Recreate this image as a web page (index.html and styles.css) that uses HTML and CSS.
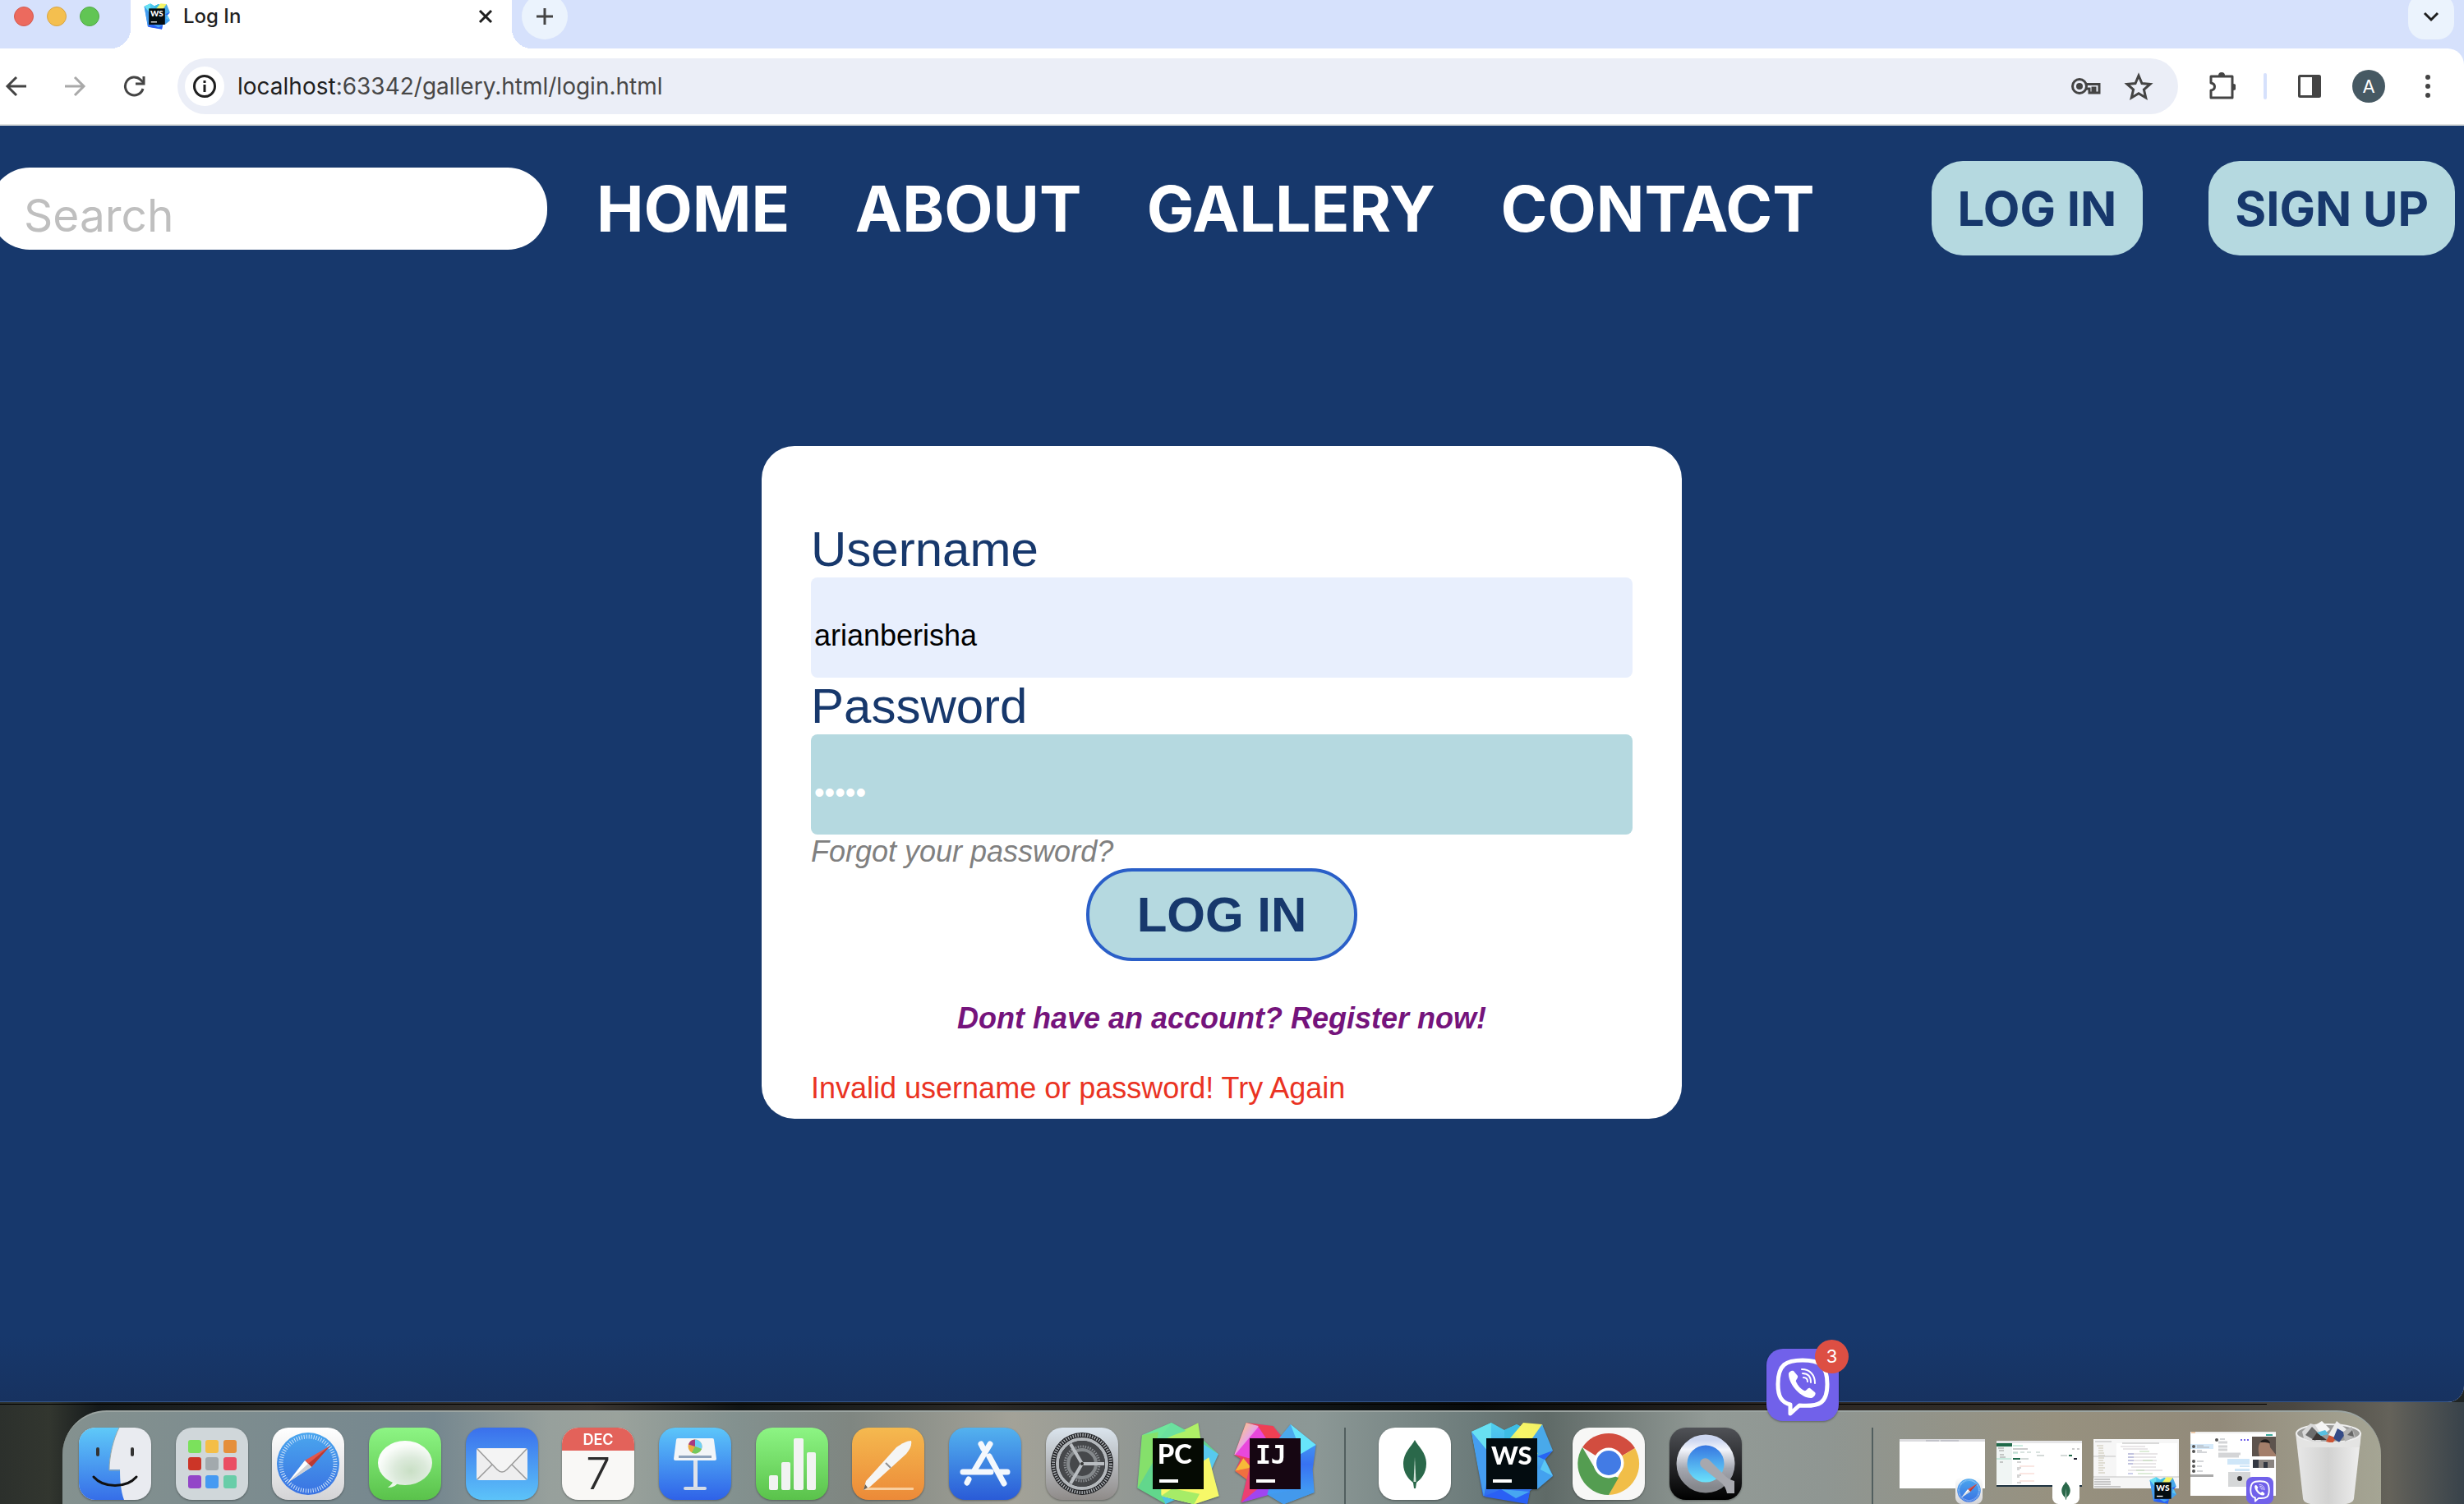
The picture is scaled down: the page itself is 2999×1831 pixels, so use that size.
FILE: index.html
```html
<!DOCTYPE html>
<html lang="en">
<head>
<meta charset="utf-8">
<meta name="viewport" content="width=device-width, initial-scale=1">
<title>Log In</title>
<link rel="stylesheet" href="styles.css">
</head>
<body>

<svg class="defs" width="0" height="0" aria-hidden="true">
  <defs>
    <linearGradient id="white-gray" x1="0" y1="0" x2="0" y2="1"><stop offset="0" stop-color="#fff"/><stop offset="1" stop-color="#d4d4d6"/></linearGradient>
    <linearGradient id="finder-blue" x1="0" y1="0" x2="0" y2="1"><stop offset="0" stop-color="#5fc9f8"/><stop offset="1" stop-color="#366ee8"/></linearGradient>
    <linearGradient id="green" x1="0" y1="0" x2="0" y2="1"><stop offset="0" stop-color="#8df584"/><stop offset="1" stop-color="#5ac24b"/></linearGradient>
    <linearGradient id="mail" x1="0" y1="0" x2="0" y2="1"><stop offset="0" stop-color="#3a70ec"/><stop offset="1" stop-color="#5cc3f9"/></linearGradient>
    <linearGradient id="blue-down" x1="0" y1="0" x2="0" y2="1"><stop offset="0" stop-color="#5cc6fa"/><stop offset="1" stop-color="#2f62e8"/></linearGradient>
    <linearGradient id="orange" x1="0" y1="0" x2="0" y2="1"><stop offset="0" stop-color="#f5b94f"/><stop offset="1" stop-color="#ec8a38"/></linearGradient>
    <linearGradient id="store" x1="0" y1="0" x2="0" y2="1"><stop offset="0" stop-color="#53b2ef"/><stop offset="1" stop-color="#2a5bd7"/></linearGradient>
    <linearGradient id="safari-blue" x1="0" y1="0" x2="0" y2="1"><stop offset="0" stop-color="#4aa6ee"/><stop offset="1" stop-color="#3a72e2"/></linearGradient>
    <linearGradient id="gear-plate" x1="0" y1="0" x2="0" y2="1"><stop offset="0" stop-color="#dbe5ee"/><stop offset="1" stop-color="#8f8b89"/></linearGradient>
    <linearGradient id="black-down" x1="0" y1="0" x2="0" y2="1"><stop offset="0" stop-color="#505257"/><stop offset="1" stop-color="#000"/></linearGradient>
    <linearGradient id="qt-ring" x1="0" y1="0" x2="0" y2="1"><stop offset="0" stop-color="#ccd6f0"/><stop offset=".2" stop-color="#f2f5fc"/><stop offset=".6" stop-color="#a4a7b0"/><stop offset="1" stop-color="#85878c"/></linearGradient>
    <linearGradient id="qt-blue" x1="0" y1="0" x2="0" y2="1"><stop offset="0" stop-color="#2e66dd"/><stop offset="1" stop-color="#74f2ff"/></linearGradient>
    <linearGradient id="ws-a" x1="0" y1="0" x2="0" y2="1"><stop offset="0" stop-color="#4fd0ee"/><stop offset=".5" stop-color="#45a5f0"/><stop offset="1" stop-color="#2a5cf0"/></linearGradient>
    <linearGradient id="ws-b" x1="0" y1="1" x2="1" y2="0"><stop offset="0" stop-color="#6be0b0"/><stop offset=".5" stop-color="#f8f668"/><stop offset="1" stop-color="#f2f163"/></linearGradient>
    <linearGradient id="ij-a" x1="0" y1="0" x2="1" y2="1"><stop offset="0" stop-color="#fcd35c"/><stop offset=".5" stop-color="#e9a7e0"/><stop offset="1" stop-color="#e83ce8"/></linearGradient>
    <linearGradient id="ij-b" x1="0" y1="0" x2="1" y2="1"><stop offset="0" stop-color="#f1434c"/><stop offset=".6" stop-color="#e83a78"/><stop offset="1" stop-color="#8a45f5"/></linearGradient>
    <linearGradient id="ij-c" x1="0" y1="0" x2="0" y2="1"><stop offset="0" stop-color="#4cb5f2"/><stop offset=".5" stop-color="#3872f2"/><stop offset="1" stop-color="#46aef3"/></linearGradient>
    <linearGradient id="trash" x1="0" y1="0" x2="1" y2="0"><stop offset="0" stop-color="#e8e8e8"/><stop offset=".5" stop-color="#d2d2d1"/><stop offset="1" stop-color="#efefef"/></linearGradient>
    <radialGradient id="bubble" cx=".6" cy=".68" r=".6"><stop offset="0" stop-color="#c9dfc5"/><stop offset=".5" stop-color="#dceadb"/><stop offset="1" stop-color="#fafdfa"/></radialGradient>
  </defs>

  <symbol id="safari" viewBox="0 0 88 88">
    <rect width="88" height="88" rx="20" fill="url(#white-gray)"/>
    <circle cx="44" cy="44" r="38" fill="url(#safari-blue)"/>
    <circle cx="44" cy="44" r="33" fill="none" stroke="#cfe4fa" stroke-width="5" stroke-dasharray="1 2"/>
    <path d="M71 22 40 40l8 8z" fill="#e2564b"/><path d="M44 44l27-22-23 26z" fill="#b93a33"/>
    <path d="M19 67 40 40l8 8z" fill="#fff"/><path d="M19 67 44 44l4 4z" fill="#ccd0d6"/>
  </symbol>
  <symbol id="mongo" viewBox="0 0 88 88">
    <rect width="88" height="88" rx="20" fill="#fff"/>
    <path d="M44 15c4 8 14 15 14 29 0 12-7 19-12 23l-1 7h-2l-1-7c-5-4-12-11-12-23 0-14 10-21 14-29z" fill="#2a684a"/>
    <path d="M44 36l1.500 30h-3z" fill="#cfe0d6"/>
  </symbol>
  <symbol id="viber" viewBox="0 0 88 88">
    <rect width="88" height="88" rx="20" fill="#7161ea"/>
    <path d="M44 14c-20 0-30 5-30 29 0 15 4 22 15 25v11l11-10c25 2 34-3 34-26 0-24-10-29-30-29z" fill="none" stroke="#fff" stroke-width="5" stroke-linejoin="round"/>
    <path d="M27 31c0-3 4-5 6-4l5 6c1 3-3 5-2 7 2 5 6 9 10 11 3 1 4-4 7-3l6 5c2 2-1 6-4 7-12 1-28-16-28-29z" fill="#fff"/>
    <path d="M43 25c10 0 16 7 16 17M44 30c7 0 10 4 10 11M45 35c3 0 5 2 5 5" fill="none" stroke="#fff" stroke-width="2" stroke-linecap="round"/>
  </symbol>
  <symbol id="webstorm" viewBox="-6 -7 100 101">
    <path d="M-5 5 19-6l16 9 15-7 20 10 16 20-2 12 10 20-28 19-3 15-54-9z" fill="url(#ws-a)"/>
    <path d="M-5 5 19-6l0 40z" fill="#68e0f2"/><path d="M-5 5 10 84l9-50z" fill="#459df0"/>
    <path d="M50-4 66 6 35 30V3z" fill="#3dbde4"/>
    <path d="M36 20 58-6l23 2 6 24-20 20z" fill="url(#ws-b)"/>
    <path d="M81-4l13 32-10 11-20-19z" fill="#49a9ea"/><path d="M94 28 84 39l-9-4z" fill="#2764f4"/>
    <path d="M84 39l10 20-19 0z" fill="#5bc8f4"/><path d="M75 75l19-16-19-10z" fill="#43a1ef"/>
    <path d="M10 84l21-9 35 3-3 15z" fill="#2a60f4"/><path d="M31 75l35 3-17 8z" fill="#47a6f1"/>
    <rect x="13" y="13" width="62" height="62" fill="#030c10"/>
    <rect x="21" y="63" width="23" height="4" fill="#fff"/>
  </symbol>
</svg>

<div class="browser">
  <div class="tabs">
    <div class="lights"><span class="light red"></span><span class="light yellow"></span><span class="light green"></span></div>
    <div class="tab">
      <svg class="favicon" viewBox="-6 -7 100 101" aria-hidden="true"><use href="#webstorm" x="-6" y="-7" width="100" height="101"/><text class="jet" x="19" y="45" font-size="31">WS</text></svg>
      <span class="tab-title">Log In</span>
      <button class="plain" aria-label="Close tab"><svg width="24" height="24" viewBox="0 0 24 24"><path d="M5 5l14 14M19 5L5 19" stroke="#1f1f1f" stroke-width="3"/></svg></button>
    </div>
    <button class="plain new-tab" aria-label="New tab"><svg width="24" height="24" viewBox="0 0 24 24"><path d="M12 2v20M2 12h20" stroke="#444" stroke-width="3"/></svg></button>
    <button class="plain tab-search" aria-label="Search tabs"><svg width="20" height="20" viewBox="0 0 20 20"><path d="M2 6l8 8 8-8" fill="none" stroke="#1f1f1f" stroke-width="3"/></svg></button>
  </div>

  <div class="toolbar">
    <button class="plain tool" aria-label="Back"><svg width="28" height="28" viewBox="0 0 28 28"><path d="M26 14H4M14 3L3 14l11 11" fill="none" stroke="#444" stroke-width="3"/></svg></button>
    <button class="plain tool" aria-label="Forward"><svg width="28" height="28" viewBox="0 0 28 28"><path d="M1 14h22M13 3l11 11-11 11" fill="none" stroke="#a9a9a9" stroke-width="3"/></svg></button>
    <button class="plain tool" aria-label="Reload"><svg width="28" height="28" viewBox="0 0 28 28"><path d="M24 17a11 11 0 1 1-3-11l4 4" fill="none" stroke="#444" stroke-width="3"/><path d="M25 2v9H15" fill="none" stroke="#444" stroke-width="3"/></svg></button>
    <div class="address">
      <button class="plain info" aria-label="Site information"><svg width="30" height="30" viewBox="0 0 30 30"><circle cx="15" cy="15" r="12.500" fill="none" stroke="#1f1f1f" stroke-width="3"/><path d="M15 13v9M15 8v3" stroke="#1f1f1f" stroke-width="3"/></svg></button>
      <span class="url"><span class="host">localhost</span>:63342/gallery.html/login.html</span>
      <button class="plain tool" aria-label="Passwords"><svg width="38" height="28" viewBox="0 0 38 28"><circle cx="11" cy="14" r="8.500" fill="none" stroke="#444" stroke-width="3"/><circle cx="11" cy="14" r="4" fill="#444"/><path d="M18 11.500h17v10.500h-5v-6h-3v6h-4v-5h-4" fill="none" stroke="#444" stroke-width="3"/></svg></button>
      <button class="plain tool star" aria-label="Bookmark"><svg width="36" height="36" viewBox="0 0 36 36"><path d="M18 5l4 9.500 10 .9-7.600 6.700 2.300 9.900-8.700-5.200L9.300 32l2.300-9.900L4 15.400l10-.9z" fill="none" stroke="#444" stroke-width="3"/></svg></button>
    </div>
    <button class="plain tool" aria-label="Extensions"><svg width="36" height="36" viewBox="0 0 36 36"><path d="M6 6h26v26H6v-9c6-1 6-8 0-9z" fill="none" stroke="#444" stroke-width="3" stroke-linejoin="round"/><path d="M15 5a4 4 0 0 1 8 0zM33 15a4 4 0 0 1 0 8z" fill="#444"/></svg></button>
    <span class="bar"></span>
    <button class="plain tool" aria-label="Side panel"><svg width="30" height="30" viewBox="0 0 30 30"><rect x="2.500" y="2.500" width="25" height="25" rx="1" fill="none" stroke="#444" stroke-width="3"/><path d="M18 3h9v24h-9z" fill="#444"/></svg></button>
    <button class="plain avatar" aria-label="Profile">A</button>
    <button class="plain tool" aria-label="Menu"><svg width="8" height="30" viewBox="0 0 8 30"><g fill="#444"><circle cx="4" cy="4" r="3"/><circle cx="4" cy="15" r="3"/><circle cx="4" cy="26" r="3"/></g></svg></button>
  </div>

  <div class="viewport">
    <div class="page">
      <header class="site-header">
        <input class="search" type="search" placeholder="Search" aria-label="Search">
        <nav class="menu">
          <a href="#home">HOME</a><a href="#about">ABOUT</a><a href="#gallery">GALLERY</a><a href="#contact">CONTACT</a>
        </nav>
        <div class="account">
          <button class="account-button">LOG IN</button>
          <button class="account-button">SIGN UP</button>
        </div>
      </header>
      <form class="card" onsubmit="return false">
        <label for="user">Username</label>
        <input class="field filled" id="user" type="text" value="arianberisha">
        <label for="pass">Password</label>
        <input class="field" id="pass" type="password" value="12345">
        <a class="forgot" href="#forgot">Forgot your password?</a>
        <button class="submit" type="submit">LOG IN</button>
        <a class="register" href="#register">Dont have an account? Register now!</a>
        <p class="error">Invalid username or password! Try Again</p>
      </form>
    </div>
  </div>
</div>

<div class="desktop">
  <div class="dock">
    <div class="apps">
      <button class="app" aria-label="Finder"><svg viewBox="0 0 88 88"><rect width="88" height="88" rx="20" fill="#e9ebf0"/><path d="M49 0C42 14 37 34 37 51h13c0 13 1 26 5 37H20A20 20 0 0 1 0 68V20A20 20 0 0 1 20 0z" fill="url(#finder-blue)"/><path d="M49 0C42 14 37 34 37 52h13" fill="none" stroke="#9aa" stroke-width="1"/><path d="M23 26v7M65 26v7" stroke="#333" stroke-width="4" stroke-linecap="round"/><path d="M18 60c12 14 40 14 52 0" fill="none" stroke="#111" stroke-width="3" stroke-linecap="round"/></svg></button>
      <button class="app" aria-label="Launchpad"><svg viewBox="0 0 88 88"><rect width="88" height="88" rx="20" fill="#d0d7da"/><g><rect x="15" y="15" width="16" height="16" rx="3" fill="#7be15c"/><rect x="36" y="15" width="16" height="16" rx="3" fill="#f4be47"/><rect x="58" y="15" width="16" height="16" rx="3" fill="#e58f3b"/><rect x="15" y="36" width="16" height="16" rx="3" fill="#cc3527"/><rect x="36" y="36" width="16" height="16" rx="3" fill="#a2a9ad"/><rect x="58" y="36" width="16" height="16" rx="3" fill="#ea4d63"/><rect x="15" y="58" width="16" height="16" rx="3" fill="#9346c8"/><rect x="36" y="58" width="16" height="16" rx="3" fill="#459af2"/><rect x="58" y="58" width="16" height="16" rx="3" fill="#68cda8"/></g></svg></button>
      <button class="app" aria-label="Safari"><svg><use href="#safari"/></svg></button>
      <button class="app" aria-label="Messages"><svg viewBox="0 0 88 88"><rect width="88" height="88" rx="20" fill="url(#green)"/><path d="M30 62c0 5-3 8-7 11 7 0 11-3 14-8z" fill="#eaf8e7"/><ellipse cx="44" cy="43" rx="33" ry="27" fill="url(#bubble)"/></svg></button>
      <button class="app" aria-label="Mail"><svg viewBox="0 0 88 88"><rect width="88" height="88" rx="20" fill="url(#mail)"/><rect x="13" y="25" width="62" height="39" rx="3" fill="#eeeeef"/><path d="M14 63l19-19M74 63L55 44" stroke="#999" stroke-width="1.500"/><path d="M14 26l24 25c4 4 8 4 12 0l24-25" fill="#f4f4f4" stroke="#9b9b9b" stroke-width="1.500"/></svg></button>
      <button class="app" aria-label="Calendar"><svg viewBox="0 0 88 88"><rect width="88" height="88" rx="20" fill="#f9f8f6"/><path d="M0 28v-8A20 20 0 0 1 20 0h48a20 20 0 0 1 20 20v8z" fill="#e3625a"/><text class="month" x="44" y="21">DEC</text><text class="day" x="44" y="75">7</text></svg></button>
      <button class="app" aria-label="Keynote"><svg viewBox="0 0 88 88"><rect width="88" height="88" rx="20" fill="url(#blue-down)"/><path d="M42 40h5v33h-5z" fill="#dfe3ea"/><rect x="30" y="72" width="28" height="4" rx="2" fill="#d4dbe6"/><path d="M23 13h42q2 0 2 2l3 23q0 2-2 2H20q-2 0-2-2l3-23q0-2 2-2z" fill="#f2f5f8"/><path d="M24 34h40v3H24z" fill="#8da2bb"/><circle cx="44" cy="23" r="8.500" fill="#ecaa3d"/><path d="M44 23v-8.500a8.500 8.500 0 0 1 8 11.500z" fill="#6fd0f6"/><path d="M44 23l8 3a8.500 8.500 0 0 1-12 4.500z" fill="#74c95d"/><path d="M44 23v-8.500a8.500 8.500 0 0 0-8 6z" fill="#a63a80"/></svg></button>
      <button class="app" aria-label="Numbers"><svg viewBox="0 0 88 88"><rect width="88" height="88" rx="20" fill="url(#green)"/><g fill="#f1f3f2"><rect x="16" y="58" width="11" height="18" rx="2"/><rect x="31" y="42" width="11" height="34" rx="2"/><rect x="46" y="13" width="12" height="63" rx="2"/><rect x="62" y="30" width="11" height="46" rx="2"/></g></svg></button>
      <button class="app" aria-label="Pages"><svg viewBox="0 0 88 88"><rect width="88" height="88" rx="20" fill="url(#orange)"/><rect x="15" y="73" width="60" height="3" rx="1" fill="#f9cf9f"/><path d="M14 76l3-11 37-41c7-5 13-8 18-8 1 5-1 10-6 16L22 72z" fill="#f5f5f4"/><path d="M14 76l2-7 3 4z" fill="#6b6258"/><path d="M41 43l6 6" stroke="#8f8f8f" stroke-width="2"/></svg></button>
      <button class="app" aria-label="App Store"><svg viewBox="0 0 88 88"><rect width="88" height="88" rx="20" fill="url(#store)"/><g fill="none" stroke="#f4f8fd" stroke-width="7" stroke-linecap="round"><path d="M39 20l3 6M49 35l18 33M50 20L31 52M17 54h34M61 54h10M24 63l-2 4"/></g></svg></button>
      <button class="app" aria-label="System Settings"><svg viewBox="0 0 88 88"><rect width="88" height="88" rx="20" fill="url(#gear-plate)"/><circle cx="44" cy="44" r="38" fill="#1d1e21"/><circle cx="44" cy="44" r="35" fill="none" stroke="#a9adb1" stroke-width="4" stroke-dasharray="1.500 1.500"/><circle cx="44" cy="44" r="30" fill="none" stroke="#b4b8bc" stroke-width="4"/><circle cx="44" cy="44" r="28" fill="#46484b"/><circle cx="44" cy="44" r="21" fill="none" stroke="#8c8f93" stroke-width="3" stroke-dasharray="1.500 1.500"/><circle cx="44" cy="44" r="17" fill="none" stroke="#85898c" stroke-width="4"/><path d="M44 44h27M44 44L30 20M44 44L30 68" stroke="#b9bdc1" stroke-width="4"/><circle cx="44" cy="44" r="2" fill="#333"/></svg></button>
      <button class="app" aria-label="PyCharm"><svg viewBox="270 354 264 264"><path d="M270 382l108-46 105 54 65 60-28 40 31 114-90 30-121-28-87-32z" fill="#62d491"/><path d="M270 382l108-46 20 60-60 50-60 50z" fill="#6fe59d"/><path d="M270 382l60-12-20 110-56 95z" fill="#85e06b"/><path d="M475 337l9 60h-130z" fill="#aef066"/><path d="M378 336l52 30-100 34z" fill="#6be09f"/><path d="M495 415l54 36-25 55-29-30z" fill="#58c9ee"/><path d="M340 575l174-112 37 141-90 30-121-30z" fill="#f7f868"/><path d="M340 604l120 30 20-38-100-20z" fill="#a6ec67"/><path d="M340 604l15 30 35-16z" fill="#4ec3e6"/><path d="M254 575l60-70 26 95 16 33z" fill="#62d78c"/><rect x="309" y="393" width="186" height="186" fill="#050a03"/><text class="jet" x="326" y="487" font-size="98">PC</text><rect x="333" y="543" width="69" height="12" fill="#fff"/></svg></button>
      <button class="app" aria-label="IntelliJ IDEA"><svg viewBox="624 354 264 264"><path d="M650 336l98 12 50 60-68 190-98 30 20-85-42-30 20-45-23-15z" fill="url(#ij-b)"/><path d="M650 336l45 12-30 108-58-3z" fill="url(#ij-a)"/><path d="M695 352l60 90-95 24-50-14z" fill="#e948dc"/><path d="M695 348h53l40 60-60-10z" fill="#ef4053"/><path d="M610 512l30-46 25 30-5 8z" fill="#f7b938"/><path d="M610 512l55-12-12 44z" fill="#ef7040"/><path d="M632 628l31-130 70 100z" fill="#ec3f72"/><path d="M632 628l60-50h60l-20 22z" fill="#a045f0"/><path d="M812 342l93 75-12 90 6 84-112 43-60-36 60-200z" fill="url(#ij-c)"/><path d="M812 342l93 75-60 36z" fill="#67e5fb"/><path d="M812 342l-45 55 78 30z" fill="#4ba9ee"/><path d="M727 598l122-20 50 12-112 44z" fill="#4399ec"/><rect x="663" y="393" width="186" height="186" fill="#160612"/><text class="jet serifed" x="684" y="487" font-size="94">IJ</text><rect x="687" y="543" width="69" height="12" fill="#fff"/></svg></button>
    </div>
    <span class="divider"></span>
    <div class="apps">
      <button class="app" aria-label="MongoDB Compass"><svg><use href="#mongo"/></svg></button>
      <button class="app" aria-label="WebStorm"><svg viewBox="0 0 88 88"><use href="#webstorm" x="-6" y="-7" width="100" height="101"/><text class="jet" x="19" y="45" font-size="31">WS</text></svg></button>
      <button class="app" aria-label="Chrome"><svg viewBox="0 0 88 88"><rect width="88" height="88" rx="20" fill="#f7f7f6"/><path d="M44 44L12 24a38 38 0 0 1 64 1z" fill="#d24d3f"/><path d="M44 44l32-19H44zM44 25h32a38 38 0 0 1-32 57l18-35z" fill="#f1be48"/><path d="M12 24l16 27 28 10-12 21A38 38 0 0 1 12 24z" fill="#549d51"/><circle cx="44" cy="43" r="18.500" fill="#fff"/><circle cx="44" cy="43" r="15" fill="#427be5"/></svg></button>
      <button class="app" aria-label="QuickTime Player"><svg viewBox="0 0 88 88"><rect width="88" height="88" rx="20" fill="url(#black-down)"/><circle cx="44" cy="44" r="29" fill="url(#qt-blue)" stroke="url(#qt-ring)" stroke-width="13"/><path d="M39 48a6 6 0 0 1 9-9l20 20c3 3 7 5 11 6v15H70c-1-5-3-9-6-12z" fill="#a7a8ae"/></svg></button>
      <button class="app raised" aria-label="Viber, 3 notifications"><svg><use href="#viber"/></svg><span class="badge">3</span></button>
    </div>
    <span class="divider late"></span>
    <div class="windows">
      <button class="thumb" aria-label="Safari window"><svg class="shot" viewBox="0 0 104 60"><path d="M0 0h104v60H0z" fill="#fff"/><path d="M0 0h104v3H0z" fill="#dcdcdf"/><path d="M32 2h16M50 2h22" stroke="#a9abb5"/></svg><svg class="mini"><use href="#safari"/></svg></button>
      <button class="thumb" aria-label="Compass window"><svg class="shot" viewBox="0 0 104 60"><path d="M0 2h104v56H0z" fill="#fff"/><path d="M0 2h104v3H0z" fill="#e6e6e8"/><path d="M0 8h19v47H0z" fill="#f0f5f4"/><path d="M0 5h19v4H0z" fill="#1f6a4a"/><path d="M0 56h104v2H0z" fill="#1f3342"/><path d="M20 8h12M20 17h6M0 24h18" stroke="#9edcc4"/><path d="M20 12h18M2 11h7M3 14h6M4 19h5M4 22h7M4 28h4M92 12h3M98 12h3" stroke="#999"/><path d="M20 16h6M29 16h5M37 16h5M48 16h5" stroke="#b5c8c2"/><path d="M20 24h9M88 20h4" stroke="#20694a" stroke-width="2"/><path d="M94 24h4" stroke="#223" stroke-width="2"/><path d="M78 20h8M30 24h9M49 20h9" stroke="#a9b5b0"/><path d="M28 33h18M28 42h18M28 51h18" stroke="#f6cfc7"/><path d="M25 28h5M25 35h5M25 37h3M25 44h5M25 46h3M25 53h5" stroke="#aaa"/></svg><svg class="mini"><use href="#mongo"/></svg></button>
      <button class="thumb" aria-label="WebStorm window"><svg class="shot" viewBox="0 0 104 60"><path d="M0 0h104v60H0z" fill="#f6f6f6"/><path d="M28 5h74v41H28z" fill="#fff"/><path d="M2 3h20M35 5h45" stroke="#b8b8b8"/><path d="M4 8h8M6 11h6M6 14h6M6 17h7M6 20h8M6 23h7M6 26h6M6 29h8M6 32h6M6 35h8M6 38h6M6 41h8" stroke="#c9c4b0"/><path d="M0 21h27M0 46h104" stroke="#c3c3c3"/><path d="M33 9h30M36 12h30M42 18h36M42 22h34M42 26h35M42 30h34M46 34h30M42 38h42" stroke="#d3cdd1"/><path d="M42 18h7M42 22h7M42 26h7M42 30h6M42 42h6" stroke="#9aa0d6"/><path d="M56 15h12M60 26h12M52 38h10M54 42h18" stroke="#bbd9b1"/><path d="M1 49h19M1 52h20M1 55h20M1 58h32" stroke="#999"/></svg><svg class="mini" viewBox="-6 -7 100 101"><use href="#webstorm" x="-6" y="-7" width="100" height="101"/><text class="jet" x="19" y="45" font-size="31">WS</text></svg></button>
      <button class="thumb" aria-label="Viber window"><svg class="shot" viewBox="0 0 104 78"><path d="M0 0h104v78H0z" fill="#fff"/><path d="M0 0h104v2H0z" fill="#eee"/><path d="M1 1h5" stroke="#e8a05f"/><path d="M0 52h28v3H0z" fill="#aaa"/><path d="M0 15h28v6H0z" fill="#d6eafa"/><g fill="#555"><circle cx="4" cy="18" r="2"/><circle cx="4" cy="24" r="2"/><circle cx="4" cy="36" r="2"/><circle cx="4" cy="42" r="2"/><circle cx="4" cy="48" r="2"/><circle cx="32" cy="10" r="2"/></g><path d="M8 17h8M8 19h15M8 23h6M8 25h12M8 36h8M8 42h6M8 48h7M36 9h6" stroke="#a9adb3"/><path d="M34 13h11M34 18h11M34 22h11M34 27h27M34 30h25" stroke="#d4d5d7" stroke-width="3"/><path d="M45 33h27v7H45zM60 41h12v2H60zM54 45h18v3H54z" fill="#cfe6f8"/><path d="M61 10h12" stroke="#7161ea" stroke-dasharray="2 2" stroke-width="2"/><path d="M92 4h8" stroke="#3aa99b" stroke-width="2"/><path d="M75 6h29v24H75z" fill="#5d534d"/><path d="M84 30c-1-5-3-13 2-18 5-4 11 0 11 7l7 9v2z" fill="#a37e6a"/><path d="M85 13c2-5 11-5 12 1l-6-1z" fill="#211d1d"/><path d="M76 34h26v10H76z" fill="#8a8480"/><path d="M76 34h7v10h-7zM89 37h5v7h-5z" fill="#333842"/><path d="M46 49h27v18H46z" fill="#d5d7d8"/><circle cx="60" cy="57" r="3" fill="#333"/></svg><svg class="mini"><use href="#viber"/></svg></button>
      <button class="bin" aria-label="Bin"><svg viewBox="0 0 94 103"><path d="M10 15h80l-9 80c-1 7-9 8-31 8s-30-1-31-8z" fill="url(#trash)"/><ellipse cx="50" cy="16" rx="39" ry="11" fill="#9b9b99" stroke="#eee" stroke-width="2"/><path d="M18 14L28 4l15 4-3 22-20-8z" fill="#d9d9d9"/><path d="M22 18l8-10 8 8-4 9z" fill="#6c6c6c"/><path d="M34 6l8-5 10 10-10 8z" fill="#f5f5f5"/><path d="M30 24l6-9 12 9z" fill="#3d3635"/><path d="M36 15l10-3 4 5-9 2z" fill="#58bfe0"/><path d="M47 26l8-16 4 12-4 6z" fill="#cd5535"/><path d="M50 18L60 1l12 10-9 12z" fill="#ececec"/><path d="M56 22l5-12 10 6-8 11z" fill="#344a86"/><path d="M68 14l10-6 5 12-13 6z" fill="#b4b4b4"/><path d="M73 18l6-6 2 8z" fill="#666"/><path d="M11 19c5 6 20 8 39 8s34-2 39-8l-1 14H13z" fill="#e4e4e3"/></svg></button>
    </div>
  </div>
</div>

</body>
</html>
```
FILE: styles.css
```css
* { box-sizing: border-box; }

body {
  margin: 0;
  min-height: 100vh;
  display: flex;
  flex-direction: column;
  overflow: hidden;
  font-family: Inter, "Liberation Sans", sans-serif;
  background: #1f2424;
}

button, input { font-family: inherit; margin: 0; }
svg { display: block; flex: none; }
.defs { position: absolute; }

.plain {
  display: flex;
  align-items: center;
  justify-content: center;
  padding: 0;
  border: 0;
  background: none;
}

/* Browser window */
.browser {
  flex: 1;
  display: flex;
  flex-direction: column;
  overflow: hidden;
  background: #d6e1fc;
  border-radius: 0 0 20px 0;
}

.tabs {
  display: flex;
  align-items: center;
  height: 59px;
  padding: 0 12px 20px 17px;
}

.lights { display: flex; gap: 16px; margin-right: 38px; }
.light { width: 24px; height: 24px; border-radius: 50%; border: 1px solid; }
.red { background: #ec6a5e; border-color: #d35b50; }
.yellow { background: #f4bf4f; border-color: #d8a544; }
.green { background: #61c554; border-color: #52a947; }

.tab {
  position: relative;
  display: flex;
  align-items: center;
  width: 464px;
  height: 59px;
  margin-bottom: -20px;
  padding: 0 20px 20px 16px;
  background: #fff;
}
.tab::before, .tab::after {
  content: "";
  position: absolute;
  bottom: 0;
  width: 24px;
  height: 24px;
}
.tab::before { right: 100%; background: radial-gradient(circle at 0 0, transparent 24px, #fff 24px); }
.tab::after { left: 100%; background: radial-gradient(circle at 100% 0, transparent 24px, #fff 24px); }
.favicon { width: 32px; height: 32px; margin-right: 16px; }
.tab-title { flex: 1; font-size: 24px; line-height: 28px; font-weight: 500; color: #1f1f1f; }

.new-tab { width: 56px; height: 56px; margin-left: 12px; border-radius: 50%; background: #ebf3fd; }
.tab-search { width: 56px; height: 56px; margin-left: auto; border-radius: 20px; background: #ebf3fd; }

.toolbar {
  display: flex;
  align-items: center;
  gap: 32px;
  height: 94px;
  padding-right: 24px;
  background: #fff;
  border-bottom: 2px solid #dfe2e0;
  border-radius: 0 20px 0 0;
}
.tool { width: 40px; height: 40px; }
.address {
  flex: 1;
  display: flex;
  align-items: center;
  height: 68px;
  padding: 0 28px 0 9px;
  border-radius: 34px;
  background: #ebeef7;
}
.info { width: 48px; height: 48px; border-radius: 50%; background: #fff; }
.url { flex: 1; padding-left: 16px; font-size: 28px; line-height: 34px; color: #474747; }
.host { color: #1f1f1f; }
.star { margin-left: 24px; }
.bar { width: 4px; height: 32px; border-radius: 2px; background: #d6e1fc; }
.avatar { width: 40px; height: 40px; border-radius: 50%; background: #465963; color: #fff; font-size: 22px; }

/* Web page */
.viewport {
  flex: 1;
  display: flex;
  background: linear-gradient(to top, #173260, #17386c 80px);
  border-bottom: 1px solid #35558a;
}
.page { flex: 1; margin-left: -25px; }

.site-header {
  display: flex;
  align-items: center;
  padding: 43px 11px 0 13px;
}
.search {
  width: 678px;
  height: 100px;
  padding: 16px 41px 0;
  border: 0;
  border-radius: 48px;
  background: #fff;
  font-size: 55px;
  outline: 0;
}
.search::placeholder { color: #bfbfbf; }
.menu {
  flex: 1;
  display: flex;
  justify-content: space-between;
  margin: 0 142px 0 60px;
}
.menu a {
  color: #fff;
  font-size: 77px;
  line-height: 100px;
  font-weight: 700;
  text-decoration: none;
}
.account { display: flex; gap: 80px; }
.account-button {
  height: 115px;
  padding: 0 32px;
  border: 0;
  border-radius: 38px;
  background: #b5d9e0;
  color: #17386c;
  font-size: 58px;
  font-weight: 700;
}

.card {
  display: flex;
  flex-direction: column;
  width: 1120px;
  max-width: 100%;
  margin: 232px auto 0;
  padding: 91px 60px 17px;
  border-radius: 40px;
  background: #fff;
  font-family: "Liberation Sans", Arial, sans-serif;
  font-size: 36px;
  line-height: 41px;
}
.card label { color: #17386c; font-size: 60px; line-height: 69px; }
.field {
  height: 122px;
  padding: 19px 4px 0;
  border: 0;
  border-radius: 8px;
  background: #b5d9e0;
  color: #fff;
  font-size: 36px;
}
.filled { background: #e8effd; color: #000; }
.forgot { align-self: flex-start; color: #808080; font-style: italic; text-decoration: none; }
.submit {
  align-self: center;
  height: 113px;
  padding: 0 58px;
  border: 4px solid #2a5fc8;
  border-radius: 56px;
  background: #b5d9e0;
  color: #17386c;
  font-size: 60px;
  font-weight: 700;
}
.register {
  align-self: center;
  margin: 49px 0 44px;
  color: #75147c;
  font-style: italic;
  font-weight: 700;
  text-decoration: none;
}
.error { margin: 0; color: #ea3323; }

/* Desktop and dock */
.desktop {
  padding: 10px 101px 0 76px;
  background:
    linear-gradient(#000, #000) 0 2px / 92% 1px no-repeat,
    linear-gradient(to right, #2c302c 0, #32362f 2%, #151a1b 4%, #262726 12%, #3b3631 24%, #111515 30%, #2c2a27 40%, #14191b 50%, #080b0b 60%, #2c2723 72%, #332f2a 85%, #4a4741 93%, #64625a 97%, #38424a 100%);
}
.dock {
  display: grid;
  grid-template-columns: 1500fr 82px 560fr 74px 566fr;
  height: 114px;
  padding: 19px 20px 0;
  border-top: 2px solid #9ca5a2;
  border-radius: 54px 54px 0 0;
  background: linear-gradient(to right, #84918f 0, #75878f 16%, #97a09c 21%, #9aa29c 24%, #83918f 29%, #7f8681 34%, #a3a298 41%, #8c9492 48%, #8c9896 54%, #6c7b7a 61%, #5f6a67 64%, #929a96 71%, #8f9692 76%, #97917f 86%, #928a7a 93%, #a5a594 100%);
}
.apps, .windows { display: flex; }
.apps { justify-content: space-between; }
.windows { gap: 14px; }
.app, .thumb, .bin {
  position: relative;
  flex: none;
  padding: 0;
  border: 0;
  background: none;
}
.app { width: 88px; height: 88px; }
.app svg { width: 88px; height: 88px; overflow: visible; filter: drop-shadow(0 1px 1px rgba(0, 0, 0, .35)); }
.raised { top: -96px; }
.badge {
  position: absolute;
  top: -11px;
  right: -12px;
  width: 41px;
  height: 41px;
  border-radius: 50%;
  background: #dd4f43;
  color: #fff;
  font-size: 22px;
  line-height: 41px;
  text-align: center;
}
.divider { justify-self: center; width: 2px; height: 100px; background: #525f5f; }
.late { margin-left: 8px; }
.thumb { width: 104px; height: 88px; display: flex; align-items: center; }
.shot { width: 104px; }
.mini { position: absolute; right: 3px; top: 60px; width: 33px; height: 33px; }
.bin { width: 94px; height: 103px; margin-top: -9px; }

.month { font-size: 18px; font-weight: 600; fill: #fff; text-anchor: middle; }
.day { font-size: 54px; font-weight: 300; fill: #2b2b2b; text-anchor: middle; }
.jet { font-family: Lato, sans-serif; font-weight: 900; fill: #fff; }
.serifed { font-family: "DejaVu Sans Mono", monospace; font-weight: 700; }
```
